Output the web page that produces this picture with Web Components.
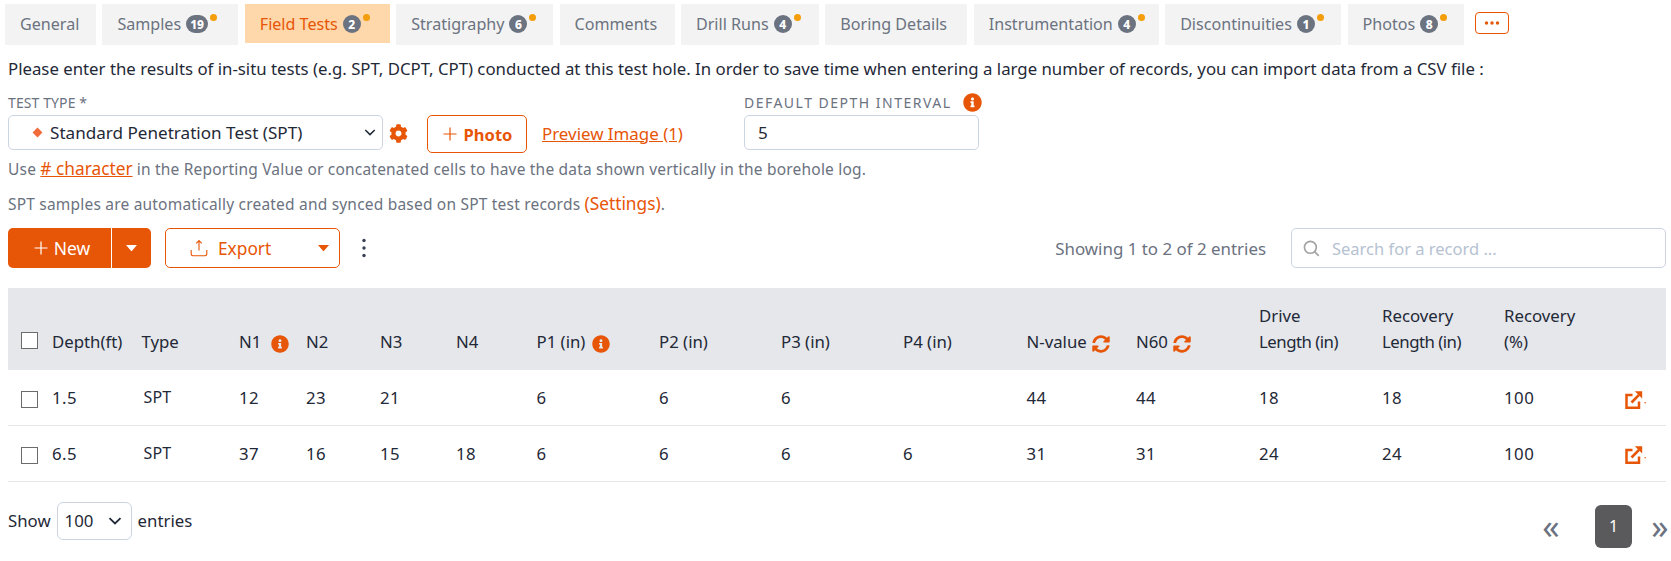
<!DOCTYPE html>
<html lang="en"><head><meta charset="utf-8"><title>Field Tests</title>
<style>
html,body{margin:0;padding:0;background:#fff}
body{width:1671px;height:561px;overflow:hidden;font-family:"Noto Sans",Lato,sans-serif;font-size:16px;color:#1f2937}
</style></head><body>
<field-tests-page></field-tests-page>
<script>
const PATHS={
 info:'M256 8C119.043 8 8 119.083 8 256c0 136.997 111.043 248 248 248s248-111.003 248-248C504 119.083 392.957 8 256 8zm0 110c23.196 0 42 18.804 42 42s-18.804 42-42 42-42-18.804-42-42 18.804-42 42-42zm56 254c0 6.627-5.373 12-12 12h-88c-6.627 0-12-5.373-12-12v-24c0-6.627 5.373-12 12-12h12v-64h-12c-6.627 0-12-5.373-12-12v-24c0-6.627 5.373-12 12-12h64c6.627 0 12 5.373 12 12v100h12c6.627 0 12 5.373 12 12v24z',
 cog:'M487.4 315.7l-42.6-24.6c4.3-23.2 4.3-47 0-70.2l42.6-24.6c4.9-2.8 7.1-8.6 5.5-14-11.1-35.6-30-67.8-54.7-94.6-3.8-4.1-10-5.1-14.8-2.3L380.8 110c-17.9-15.4-38.5-27.3-60.8-35.1V25.8c0-5.6-3.9-10.5-9.4-11.7-36.7-8.2-74.3-7.8-109.2 0-5.5 1.2-9.4 6.1-9.4 11.7V75c-22.2 7.9-42.8 19.8-60.8 35.1L88.7 85.5c-4.9-2.8-11-1.9-14.8 2.3-24.7 26.7-43.6 58.9-54.7 94.6-1.7 5.4.6 11.2 5.5 14L67.3 221c-4.3 23.2-4.3 47 0 70.2l-42.6 24.6c-4.9 2.8-7.1 8.6-5.5 14 11.1 35.6 30 67.8 54.7 94.6 3.8 4.1 10 5.1 14.8 2.3l42.6-24.6c17.9 15.4 38.5 27.3 60.8 35.1v49.2c0 5.6 3.9 10.5 9.4 11.7 36.7 8.2 74.3 7.8 109.2 0 5.5-1.2 9.4-6.1 9.4-11.7v-49.2c22.2-7.9 42.8-19.8 60.8-35.1l42.6 24.6c4.9 2.8 11 1.9 14.8-2.3 24.7-26.7 43.6-58.9 54.7-94.6 1.5-5.5-.7-11.3-5.6-14.1zM256 336c-44.1 0-80-35.9-80-80s35.9-80 80-80 80 35.9 80 80-35.9 80-80 80z',
 sync:'M370.72 133.28C339.458 104.008 298.888 87.962 255.848 88c-77.458.068-144.328 53.178-162.791 126.85-1.344 5.363-6.122 9.15-11.651 9.15H24.103c-7.498 0-13.194-6.807-11.807-14.176C33.933 94.924 134.813 8 256 8c66.448 0 126.791 26.136 171.315 68.685L463.03 40.97C478.149 25.851 504 36.559 504 57.941V192c0 13.255-10.745 24-24 24H345.941c-21.382 0-32.09-25.851-16.971-40.971l41.75-41.749zM32 296h134.059c21.382 0 32.09 25.851 16.971 40.971l-41.75 41.75c31.262 29.273 71.835 45.319 114.876 45.28 77.418-.07 144.315-53.144 162.787-126.849 1.344-5.363 6.122-9.15 11.651-9.15h57.304c7.498 0 13.194 6.807 11.807 14.176C478.067 417.076 377.187 504 256 504c-66.448 0-126.791-26.136-171.315-68.685L48.97 471.03C33.851 486.149 8 475.441 8 454.059V320c0-13.255 10.745-24 24-24z'
};
class XIcon extends HTMLElement{
 connectedCallback(){
  const n=this.getAttribute('name'),s=this.getAttribute('size')||18;
  const r=this.attachShadow({mode:'open'});
  let inner;
  if(PATHS[n]) inner=`<svg viewBox="0 0 512 512" width="${s}" height="${s}"><path fill="currentColor" d="${PATHS[n]}"/></svg>`;
  else if(n==='plus') inner=`<svg viewBox="0 0 16 16" width="${s}" height="${s}"><path d="M8 1.5v13M1.5 8h13" stroke="currentColor" stroke-width="1.2" fill="none"/></svg>`;
  else if(n==='upload') inner=`<svg viewBox="0 0 18 18" width="${s}" height="${s}" fill="none" stroke="currentColor" stroke-width="1.1"><path d="M9 11.5V1.8M6.3 4.3 9 1.6l2.7 2.7M1.2 11v4c0 1 .7 1.7 1.7 1.7h12.200c1 0 1.700-.7 1.700-1.700v-4"/></svg>`;
  else if(n==='caret') inner=`<svg viewBox="0 0 12 7" width="${s}" height="${s*7/12}"><path d="M0 0h12L6 7z" fill="currentColor"/></svg>`;
  else if(n==='chevron') inner=`<svg viewBox="0 0 14 8" width="${s}" height="${s*8/14}"><path d="M1.500 1.200 7 6.500l5.500-5.300" fill="none" stroke="currentColor" stroke-width="1.800"/></svg>`;
  else if(n==='search') inner=`<svg viewBox="0 0 18 18" width="${s}" height="${s}" fill="none" stroke="currentColor" stroke-width="1.700"><circle cx="7.800" cy="7.800" r="6.300"/><path d="M12.300 12.300 16.600 16.800"/></svg>`;
  else if(n==='kebab') inner=`<svg viewBox="0 0 6 20" width="6" height="20"><circle cx="3" cy="2.500" r="1.700" fill="currentColor"/><circle cx="3" cy="10" r="1.700" fill="currentColor"/><circle cx="3" cy="17.500" r="1.700" fill="currentColor"/></svg>`;
  else if(n==='open') inner=`<svg viewBox="0 0 21 18" width="21" height="18"><path d="M7.500 4H1.500v12.800h12.500V10.500" fill="none" stroke="currentColor" stroke-width="2.500"/><path d="M6.500 11.500 14 3.800" stroke="currentColor" stroke-width="2.600" fill="none"/><path d="M9.800 .2h7.400v7.400z" fill="currentColor"/><rect x="19.500" y="11" width="1.300" height="1.300" fill="currentColor"/></svg>`;
  else if(n==='dots') inner=`<svg viewBox="0 0 16 4" width="16" height="4"><circle cx="2.500" cy="2" r="1.700" fill="currentColor"/><circle cx="8" cy="2" r="1.700" fill="currentColor"/><circle cx="13.500" cy="2" r="1.700" fill="currentColor"/></svg>`;
  r.innerHTML=`<style>:host{display:inline-flex;align-items:center;justify-content:center;line-height:0;vertical-align:middle}svg{display:block}</style>${inner}`;
 }
}
customElements.define('x-icon',XIcon);

class XTab extends HTMLElement{
 connectedCallback(){
  const a=this.hasAttribute('active'),b=this.getAttribute('badge'),w=this.getAttribute('w');
  const r=this.attachShadow({mode:'open'});
  r.innerHTML=`<style>
  :host{display:flex;align-items:center;box-sizing:border-box;width:${w}px;height:${a?39:41}px;padding:0 0 ${a?0:2}px 15px;background:${a?'#fed7aa':'#f3f3f3'};color:${a?'#e75506':'#6b7280'};white-space:nowrap;font-size:16.100px;position:relative}
  .b{display:inline-flex;align-items:center;justify-content:center;height:18px;min-width:18px;padding:0 ${b&&b.length>1?4:0}px;box-sizing:border-box;border-radius:9px;background:#6b7280;color:#fff;font-size:12px;font-weight:800;margin-left:5px;margin-top:1px}
  .d{width:7px;height:7px;border-radius:50%;background:#f59e0b;margin-left:2px;margin-top:-12px;flex:none}
  </style><slot></slot>${b?`<span class="b">${b}</span><span class="d"></span>`:''}`;
 }
}
customElements.define('x-tab',XTab);

class XTabs extends HTMLElement{
 constructor(){super();this.attachShadow({mode:'open'}).innerHTML=`<style>
 :host{display:flex;gap:6.400px;padding:4px 0 0 5px;height:41px;align-items:flex-start}
 .more{box-sizing:border-box;width:34px;height:22px;margin:8px 0 0 5px;border:1px solid #e75506;border-radius:4px;color:#e75506;display:flex;align-items:center;justify-content:center}
 </style><slot></slot><div class="more"><x-icon name="dots"></x-icon></div>`;}
}
customElements.define('x-tabs',XTabs);

class XField extends HTMLElement{
 connectedCallback(){
  const r=this.attachShadow({mode:'open'});
  r.innerHTML=`<style>
  :host{display:block;width:${this.getAttribute('w')}px}
  .l{display:flex;align-items:center;gap:11px;height:24px;color:#6b7280;font-size:14px;letter-spacing:var(--ls,.1px);white-space:nowrap}
  .box{box-sizing:border-box;height:35px;margin-top:1px;border:1px solid #cbd5e1;border-radius:5px;display:flex;align-items:center;color:#1f2937;background:#fff;padding-left:var(--pl,13px);white-space:nowrap;font-size:17.100px}
  </style><div class="l">${this.getAttribute('label')}<slot name="tip"></slot></div><div class="box"><slot></slot></div>`;
 }
}
customElements.define('x-field',XField);

class XButton extends HTMLElement{
 connectedCallback(){
  this.attachShadow({mode:'open'}).innerHTML=`<style>
  :host{display:inline-flex;align-items:center;box-sizing:border-box;border-radius:5px;white-space:nowrap;cursor:pointer}
  :host([outline]){border:1px solid #e75506;color:#e75506;background:#fff}
  :host([solid]){background:#e75506;color:#fff}
  </style><slot></slot>`;
 }
}
customElements.define('x-button',XButton);

class XCheck extends HTMLElement{
 constructor(){super();this.attachShadow({mode:'open'}).innerHTML=`<style>:host{display:inline-block;box-sizing:border-box;width:17px;height:17px;border:1px solid #6b6b6b;background:#fff;vertical-align:middle}</style>`;}
}
customElements.define('x-check',XCheck);

const COLS=[44,89.5,97.5,67,74,76,80.5,122.5,122,122,123.5,109.5,123,123,122,123,39];
class XDataTable extends HTMLElement{
 connectedCallback(){
  const info=m=>`<x-icon name="info" size="18" style="color:#e75506;margin-left:${m}px"></x-icon>`;
  const sync='<x-icon name="sync" size="18" style="color:#e75506;margin-left:5px"></x-icon>';
  const L='<span class="ln">Length (in)</span>';
  const head=['<x-check></x-check>','Depth(ft)','Type','N1'+info(10),'N2','N3','N4','P1 (in)'+info(7),'P2 (in)','P3 (in)','P4 (in)','N-value'+sync,'N60'+sync,'Drive<br>'+L,'Recovery<br>'+L,'Recovery<br>(%)',''];
  const rows=[['1.5','SPT','12','23','21','','6','6','6','','44','44','18','18','100'],['6.5','SPT','37','16','15','18','6','6','6','6','31','31','24','24','100']];
  const r=this.attachShadow({mode:'open'});
  r.innerHTML=`<style>
  :host{display:block;margin:20px 5px 0 8px}
  table{border-collapse:collapse;table-layout:fixed;width:${COLS.reduce((a,b)=>a+b)}px;font-size:16.800px;color:#1f2937}
  th{background:#e5e7eb;font-weight:400;text-align:left;vertical-align:bottom;padding:0 0 15px;line-height:26px;height:82px;box-sizing:border-box;white-space:nowrap}
  td{height:55.500px;box-sizing:border-box;padding:0;border-bottom:1px solid #e5e7eb;white-space:nowrap;letter-spacing:.5px}
  .c{padding-left:13px}
  th.c{padding-bottom:18px}
  .ln{letter-spacing:-.5px}
  .t{position:relative;top:-1px;left:2px;font-size:16px;letter-spacing:.2px}
  </style><table><colgroup>${COLS.map(w=>`<col style="width:${w}px">`).join('')}</colgroup>
  <thead><tr>${head.map((h,i)=>`<th class="${i?'':'c'}">${h}</th>`).join('')}</tr></thead>
  <tbody>${rows.map(v=>`<tr><td class="c"><x-check></x-check></td>${v.map((t,i)=>`<td>${i==1?`<span class="t">${t}</span>`:t}</td>`).join('')}<td><x-icon name="open" style="color:#e75506;margin-left:-2px"></x-icon></td></tr>`).join('')}</tbody></table>`;
 }
}
customElements.define('x-data-table',XDataTable);

class FieldTestsPage extends HTMLElement{
 constructor(){super();this.attachShadow({mode:'open'}).innerHTML=`<style>
 :host{display:block;--o:#e75506}
 .intro{margin:0 0 0 8px;height:45px;padding-top:12px;box-sizing:border-box;line-height:24px;font-size:16.800px;color:#1f2937;white-space:nowrap}
 .form{display:flex;align-items:flex-start;margin:0 0 0 8px}
 .after-select{display:flex;align-items:center;height:36px;margin-top:25px}
 .diamond{width:7px;height:7px;background:#f26b3a;transform:rotate(45deg);margin:0 9px 0 25px}
 .note{margin:6px 0 0 8px;height:24px;line-height:24px;font-size:15.500px;letter-spacing:.2px;color:#6b7280;white-space:nowrap}
 .note a{font-size:17.300px;letter-spacing:0;color:var(--o);text-decoration:underline}
 .note a.p{text-decoration:none}
 .gapn{margin-top:11px}
 .bar{display:flex;align-items:center;margin:12px 5px 0 8px;height:40px}
 .new{height:40px;width:143px;font-size:17.500px}
 .new .m{display:flex;align-items:center;justify-content:center;gap:5px;width:99px;padding-left:4px;height:100%;border-right:1px solid #fff;box-sizing:content-box}
 .new .c{display:flex;align-items:center;justify-content:center;width:39px}
 .exp{height:40px;width:175px;margin-left:14px;font-size:17.300px;padding-left:24px}
 .exp span{margin-left:10px;flex:1}
 .keb{margin-left:21px;color:#374151;display:flex}
 .show{margin-left:auto;color:#6b7280;font-size:16.900px;white-space:nowrap}
 .search{box-sizing:border-box;width:375px;height:40px;margin-left:25px;border:1px solid #cbd5e1;border-radius:5px;display:flex;align-items:center;padding-left:11px;gap:12px;color:#a3a3a3}
 .search span{color:#b6c2d2;font-size:16.500px}
 .foot{display:flex;margin:20px 0 0 8px;align-items:flex-start;height:50px}
 .len{display:flex;align-items:center;height:38px;font-size:16.800px;color:#1f2937;gap:6px}
 .sel{box-sizing:border-box;width:75px;height:38px;border:1px solid #cbd5e1;border-radius:6px;display:flex;align-items:center;padding-left:7px;justify-content:space-between;padding-right:9px}
 .pager{margin-left:auto;display:flex;align-items:center;height:43px;margin-top:3px;color:#6b7280;font-size:34px}
 .cur{box-sizing:border-box;width:37px;height:43px;background:#5a5a5c;color:#fff;border-radius:6px;display:flex;align-items:center;justify-content:center;font-size:16px;margin:0 17px 0 33px}
 .pager .g{width:22px;text-align:center;line-height:38px}
 </style>
 <x-tabs>
  <x-tab w="91">General</x-tab><x-tab w="136" badge="19">Samples</x-tab><x-tab w="145" active badge="2">Field Tests</x-tab><x-tab w="157" badge="6">Stratigraphy</x-tab><x-tab w="115">Comments</x-tab><x-tab w="138" badge="4">Drill Runs</x-tab><x-tab w="142">Boring Details</x-tab><x-tab w="185" badge="4">Instrumentation</x-tab><x-tab w="176" badge="1">Discontinuities</x-tab><x-tab w="116" badge="8">Photos</x-tab>
 </x-tabs>
 <div class="intro">Please enter the results of in-situ tests (e.g. SPT, DCPT, CPT) conducted at this test hole. In order to save time when entering a large number of records, you can import data from a CSV file :</div>
 <div class="form">
  <x-field w="375" label="TEST TYPE *" style="--pl:0"><span class="diamond" style="display:inline-block"></span>Standard Penetration Test (SPT)<x-icon name="chevron" size="12" style="margin-left:auto;margin-right:6px;color:#1f2937"></x-icon></x-field>
  <div class="after-select">
   <x-icon name="cog" size="19" style="color:#e75506;margin:0 0 0 6px"></x-icon>
   <x-button outline style="width:100px;height:38px;margin-left:19px;justify-content:center;gap:6px;margin-top:2px;font-weight:700;font-size:16.500px"><x-icon name="plus" size="16"></x-icon>Photo</x-button>
   <a style="color:#e75506;text-decoration:underline;margin-left:15px;font-size:16.900px;white-space:nowrap">Preview Image (1)</a>
  </div>
  <x-field w="235" label="DEFAULT DEPTH INTERVAL" style="margin-left:61px;--ls:1.5px"><x-icon slot="tip" name="info" size="19" style="color:#e75506"></x-icon>5</x-field>
 </div>
 <div class="note">Use <a># character</a> in the Reporting Value or concatenated cells to have the data shown vertically in the borehole log.</div>
 <div class="note gapn">SPT samples are automatically created and synced based on SPT test records <a class="p">(Settings)</a>.</div>
 <div class="bar">
  <x-button solid class="new"><span class="m"><x-icon name="plus" size="16"></x-icon>New</span><span class="c"><x-icon name="caret" size="11"></x-icon></span></x-button>
  <x-button outline class="exp"><x-icon name="upload" size="18"></x-icon><span>Export</span><x-icon name="caret" size="11" style="margin-right:10px"></x-icon></x-button>
  <span class="keb"><x-icon name="kebab"></x-icon></span>
  <span class="show">Showing 1 to 2 of 2 entries</span>
  <div class="search"><x-icon name="search" size="17"></x-icon><span>Search for a record ...</span></div>
 </div>
 <x-data-table></x-data-table>
 <div class="foot">
  <div class="len">Show<div class="sel">100<x-icon name="chevron" size="14"></x-icon></div>entries</div>
  <div class="pager"><span class="g">«</span><span class="cur">1</span><span class="g">»</span></div>
 </div>`;}
}
customElements.define('field-tests-page',FieldTestsPage);
</script></body></html>
